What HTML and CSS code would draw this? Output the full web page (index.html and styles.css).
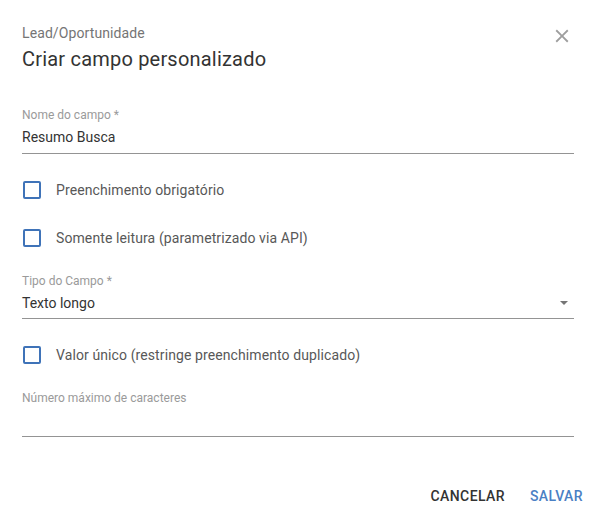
FILE: index.html
```html
<!DOCTYPE html>
<html lang="pt-BR">
<head>
<meta charset="utf-8">
<title>Criar campo personalizado</title>
<link rel="stylesheet" href="styles.css">
</head>
<body>
<div class="dialog">
  <div class="header">
    <div class="titles">
      <div class="subtitle">Lead/Oportunidade</div>
      <div class="title">Criar campo personalizado</div>
    </div>
    <button class="close" aria-label="Fechar">
      <svg viewBox="0 0 24 24" width="22" height="22"><path fill="#9e9e9e" d="M19 6.41L17.59 5 12 10.59 6.41 5 5 6.41 10.59 12 5 17.59 6.41 19 12 13.41 17.59 19 19 17.59 13.41 12z"/></svg>
    </button>
  </div>

  <div class="field field-name">
    <div class="label">Nome do campo *</div>
    <div class="input">Resumo Busca</div>
  </div>

  <div class="check check-1"><span class="box"></span><span class="check-label">Preenchimento obrigatório</span></div>
  <div class="check check-2"><span class="box"></span><span class="check-label">Somente leitura (parametrizado via API)</span></div>

  <div class="field field-type">
    <div class="label">Tipo do Campo *</div>
    <div class="input select"><span>Texto longo</span><svg class="arrow" viewBox="0 0 8 4" width="8" height="4"><polygon points="0,0 8,0 4,4" fill="#757575"/></svg></div>
  </div>

  <div class="check check-3"><span class="box"></span><span class="check-label">Valor único (restringe preenchimento duplicado)</span></div>

  <div class="field field-max">
    <div class="label">Número máximo de caracteres</div>
    <div class="input empty"></div>
  </div>

  <div class="actions">
    <button class="btn btn-cancel">CANCELAR</button>
    <button class="btn btn-save">SALVAR</button>
  </div>
</div>
</body>
</html>
```
FILE: styles.css
```css
* { box-sizing: border-box; }
html, body { margin: 0; padding: 0; background: #fff; }
body {
  font-family: Roboto, "Liberation Sans", sans-serif;
  width: 598px;
  height: 520px;
  overflow: hidden;
}
.dialog {
  padding: 25px 24px 0 22px;
}
.header {
  display: flex;
  justify-content: space-between;
  align-items: flex-start;
}
.subtitle {
  font-size: 14px;
  line-height: 16px;
  color: #757575;
  letter-spacing: 0.1px;
}
.title {
  margin-top: 4px;
  font-size: 20px;
  line-height: 28px;
  color: #333;
  letter-spacing: 0.2px;
}
.close {
  border: 0;
  background: none;
  padding: 0;
  margin: 0 1px 0 0;
  width: 22px;
  height: 22px;
  display: block;
}
.close svg { display: block; }

.field { display: flex; flex-direction: column; }
.label {
  font-size: 12px;
  line-height: 14px;
  color: #9a9a9a;
}
.input {
  margin-top: 5px;
  font-size: 14px;
  line-height: 20px;
  min-height: 20px;
  color: #333;
  padding-bottom: 6px;
  border-bottom: 1px solid #949494;
  box-sizing: content-box;
}
.select {
  display: flex;
  justify-content: space-between;
  align-items: center;
  padding-bottom: 5px;
}
.arrow { margin-right: 6px; display: block; }

.field-name { margin-top: 35px; }
.field-type { margin-top: 27px; }
.field-max { margin-top: 27px; }

.check {
  display: flex;
  align-items: center;
  height: 18px;
}
.check-1 { margin-top: 27px; }
.check-2 { margin-top: 30px; }
.check-3 { margin-top: 27px; }
.box {
  width: 18px;
  height: 18px;
  margin-left: 1px;
  border: 2px solid #3f73b8;
  border-radius: 2px;
  flex: none;
}
.check-label {
  margin-left: 15px;
  font-size: 14px;
  line-height: 18px;
  color: #585858;
  letter-spacing: 0.1px;
}

.actions {
  margin: 41px -17px 0 0;
  display: flex;
  justify-content: flex-end;
  gap: 9px;
}
.btn {
  border: 0;
  background: none;
  font-family: Roboto, "Liberation Sans", sans-serif;
  font-size: 14px;
  font-weight: 500;
  line-height: 24px;
  letter-spacing: 0.4px;
  padding: 6px 8px;
  margin: 0;
}
.btn-cancel { color: #333; }
.btn-save { color: #4a80c4; }
```
